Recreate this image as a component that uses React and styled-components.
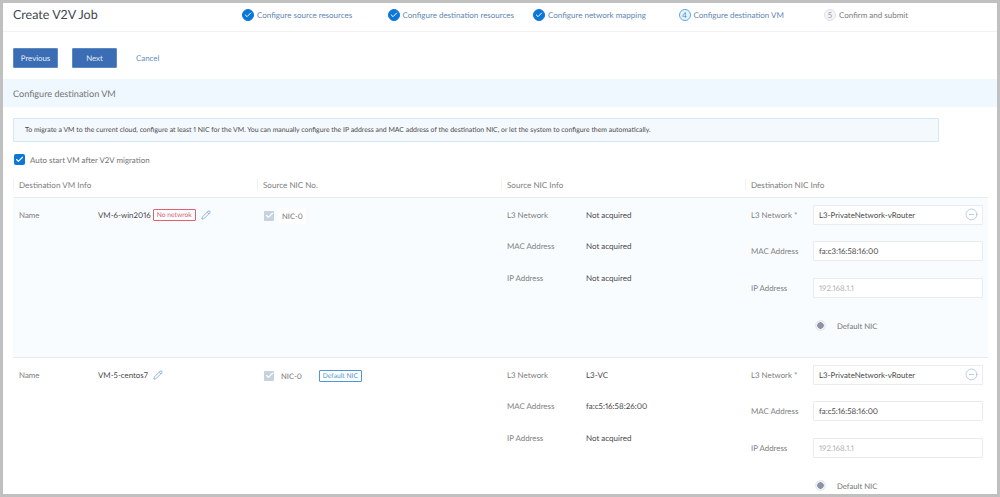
import React from "react";
import styled, { createGlobalStyle } from "styled-components";
import { Check, CircleMinus, Pencil } from "lucide-react";

const GlobalStyle = createGlobalStyle`
  html, body {
    margin: 0;
    padding: 0;
    background: #fff;
  }
  * {
    box-sizing: border-box;
  }
`;

const steps = [
  { label: "Configure source resources", state: "done" },
  { label: "Configure destination resources", state: "done" },
  { label: "Configure network mapping", state: "done" },
  { label: "Configure destination VM", state: "active", no: 4 },
  { label: "Confirm and submit", state: "todo", no: 5 }
];

const vms = [
  {
    name: "VM-6-win2016",
    noNetwork: true,
    source: { l3: "Not acquired", mac: "Not acquired", ip: "Not acquired" },
    mac: "fa:c3:16:58:16:00"
  },
  {
    name: "VM-5-centos7",
    isDefault: true,
    source: { l3: "L3-VC", mac: "fa:c5:16:58:26:00", ip: "Not acquired" },
    mac: "fa:c5:16:58:16:00"
  }
];

export default function App() {
  return (
    <Frame>
      <GlobalStyle />
      <Header>
        <Title>Create V2V Job</Title>
        <Steps>
          {steps.map((step) => (
            <Step key={step.label} state={step.state}>
              <StepIcon state={step.state}>
                {step.state === "done" ? <Check size={8} strokeWidth={3} /> : step.no}
              </StepIcon>
              {step.label}
            </Step>
          ))}
        </Steps>
      </Header>

      <Toolbar>
        <Button>Previous</Button>
        <Button>Next</Button>
        <CancelLink>Cancel</CancelLink>
      </Toolbar>

      <SectionBar>Configure destination VM</SectionBar>

      <Content>
        <Alert>
          To migrate a VM to the current cloud, configure at least 1 NIC for the VM. You can
          manually configure the IP address and MAC address of the destination NIC, or let the
          system to configure them automatically.
        </Alert>

        <AutoStart>
          <CheckBox>
            <Check size={9} strokeWidth={3} />
          </CheckBox>
          Auto start VM after V2V migration
        </AutoStart>

        <TableHead>
          <HeadCell>Destination VM Info</HeadCell>
          <HeadCell>Source NIC No.</HeadCell>
          <HeadCell>Source NIC Info</HeadCell>
          <HeadCell>Destination NIC Info</HeadCell>
        </TableHead>

        {vms.map((vm, index) => (
          <Row key={vm.name} tinted={index === 0}>
            <VmCell>
              <VmLabel>Name</VmLabel>
              <VmName>{vm.name}</VmName>
              {vm.noNetwork && <Tag color="#e0606e">No netwrok</Tag>}
              <EditIcon size={10} strokeWidth={1.6} />
            </VmCell>

            <NicCell>
              <DisabledBox>
                <Check size={9} strokeWidth={3} />
              </DisabledBox>
              <NicName tinted={index === 0}>NIC-0</NicName>
              {vm.isDefault && <DefaultTag color="#4f97d3">Default NIC</DefaultTag>}
            </NicCell>

            <SourceCell>
              <InfoRow>
                <InfoLabel>L3 Network</InfoLabel>
                <InfoValue>{vm.source.l3}</InfoValue>
              </InfoRow>
              <InfoRow>
                <InfoLabel>MAC Address</InfoLabel>
                <InfoValue>{vm.source.mac}</InfoValue>
              </InfoRow>
              <InfoRow>
                <InfoLabel>IP Address</InfoLabel>
                <InfoValue>{vm.source.ip}</InfoValue>
              </InfoRow>
            </SourceCell>

            <DestCell>
              <FieldRow>
                <InfoLabel>L3 Network *</InfoLabel>
                <Field>
                  L3-PrivateNetwork-vRouter
                  <MinusIcon size={13} strokeWidth={1} />
                </Field>
              </FieldRow>
              <FieldRow>
                <InfoLabel>MAC Address</InfoLabel>
                <Field>{vm.mac}</Field>
              </FieldRow>
              <FieldRow>
                <InfoLabel>IP Address</InfoLabel>
                <Field placeholder>192.168.1.1</Field>
              </FieldRow>
              <RadioRow>
                <Radio />
                Default NIC
              </RadioRow>
            </DestCell>
          </Row>
        ))}
      </Content>
    </Frame>
  );
}

const Frame = styled.div`
  width: 1000px;
  height: 497px;
  border: 3px solid #c0c0c0;
  background: #fff;
  overflow: hidden;
  font-family: Lato, "Open Sans", sans-serif;
  font-size: 8px;
  font-variant-numeric: proportional-nums;
  color: #666;
  text-rendering: geometricPrecision;
`;

const Header = styled.div`
  height: 29px;
  padding: 0 0 5px 10px;
  display: flex;
  align-items: center;
  border-bottom: 1px solid #f0f2f5;
`;

const Title = styled.div`
  width: 229px;
  font-size: 12.5px;
  color: #3f4650;
`;

const Steps = styled.div`
  display: grid;
  grid-template-columns: repeat(5, 145.5px);
`;

const Step = styled.div`
  display: flex;
  align-items: center;
  gap: 3px;
  white-space: nowrap;
  font-size: 8px;
  color: ${({ state }) => (state === "todo" ? "#7c7c7c" : "#5f86b5")};
`;

const StepIcon = styled.span`
  width: 12px;
  height: 12px;
  border-radius: 50%;
  display: flex;
  justify-content: center;
  align-items: center;
  font-size: 8px;
  color: ${({ state }) => (state === "active" ? "#3a8ad0" : state === "todo" ? "#9aa1aa" : "#fff")};
  background: ${({ state }) => (state === "done" ? "#0b78d7" : state === "active" ? "#e6f3fd" : "#f2f4f6")};
  border: 1px solid
    ${({ state }) => (state === "done" ? "#0b78d7" : state === "active" ? "#5aa9e6" : "#dfe3e8")};
`;

const Toolbar = styled.div`
  height: 47px;
  padding: 16px 0 0 10px;
  display: flex;
  align-items: flex-start;
  gap: 14px;
`;

const Button = styled.button`
  width: 45px;
  height: 20px;
  padding: 0;
  border: 1px solid #5b8ac4;
  border-radius: 1px;
  background: #3a6db3;
  color: #e8eef7;
  font-family: inherit;
  font-size: 7.8px;
  text-rendering: geometricPrecision;
`;

const CancelLink = styled.a`
  margin-left: 5px;
  line-height: 20px;
  font-size: 7.9px;
  color: #5f8fc4;
`;

const SectionBar = styled.div`
  height: 28px;
  padding: 1px 0 0 10px;
  display: flex;
  align-items: center;
  background: #eff8fe;
  font-size: 9.1px;
  color: #737373;
`;

const Content = styled.div`
  padding: 11px 0 0 10px;
`;

const Alert = styled.div`
  width: 926px;
  height: 24px;
  padding-left: 11px;
  display: flex;
  align-items: center;
  background: #f4f9fe;
  border: 1px solid #d3e7f8;
  border-radius: 1px;
  font-size: 6.9px;
  color: #4a4a4a;
  white-space: nowrap;
`;

const AutoStart = styled.div`
  height: 11px;
  margin: 12px 0 0 1px;
  display: flex;
  align-items: center;
  gap: 5px;
  font-size: 7.95px;
  color: #737373;
`;

const CheckBox = styled.span`
  width: 11px;
  height: 11px;
  border-radius: 2px;
  background: #0b78d7;
  color: #fff;
  display: flex;
  justify-content: center;
  align-items: center;
`;

const TableHead = styled.div`
  width: 975px;
  height: 27px;
  margin-top: 6px;
  padding-top: 1px;
  display: grid;
  grid-template-columns: repeat(4, 244px);
  align-items: center;
  border-bottom: 1px solid #e6eef5;
`;

const HeadCell = styled.div`
  height: 11px;
  padding-left: 5px;
  display: flex;
  align-items: center;
  border-left: 1px solid #f0f2f5;
  font-size: 8.1px;
  color: #7d7d7d;
`;

const Row = styled.div`
  width: 975px;
  height: 160px;
  display: grid;
  grid-template-columns: repeat(4, 244px);
  align-items: start;
  background: ${({ tinted }) => (tinted ? "#f9fcff" : "#fff")};
  border-bottom: 1px solid #e6ebf0;
`;

const VmCell = styled.div`
  padding-left: 6px;
  display: flex;
  align-items: center;
  height: 34px;
`;

const VmLabel = styled.span`
  width: 79px;
  font-size: 7.9px;
  color: #7d7d7d;
`;

const VmName = styled.span`
  font-size: 7.9px;
  color: #4a4a4a;
`;

const Tag = styled.span`
  height: 12px;
  padding: 0 3px;
  display: flex;
  align-items: center;
  border: 1px solid ${({ color }) => color};
  border-radius: 1px;
  font-size: 6.7px;
  color: ${({ color }) => color};
  margin-left: 2px;
  white-space: nowrap;
`;

const DefaultTag = styled(Tag)`
  margin-left: 17px;
`;

const EditIcon = styled(Pencil)`
  margin-left: 5px;
  color: #5f8fd0;
`;

const NicCell = styled.div`
  height: 35px;
  padding-left: 7px;
  display: flex;
  align-items: center;
`;

const DisabledBox = styled.span`
  width: 10px;
  height: 10px;
  border-radius: 1px;
  background: #c8d2dc;
  color: #fff;
  display: flex;
  justify-content: center;
  align-items: center;
`;

const NicName = styled.span`
  margin-left: ${({ tinted }) => (tinted ? "5px" : "7px")};
  padding: 0 ${({ tinted }) => (tinted ? "3px" : "0")};
  line-height: 16px;
  background: ${({ tinted }) => (tinted ? "#fff" : "transparent")};
  font-size: 7.6px;
  color: #737373;
`;

const SourceCell = styled.div`
  padding: 11px 0 0 6px;
  display: flex;
  flex-direction: column;
  gap: 20.5px;
`;

const InfoRow = styled.div`
  height: 11px;
  display: flex;
  align-items: center;
`;

const InfoLabel = styled.span`
  width: 79px;
  font-size: 7.9px;
  color: #7d7d7d;
  flex: none;
`;

const FieldRow = styled(InfoRow)`
  height: 20px;
  width: 238px;
  & > span {
    width: 62px;
  }
`;

const InfoValue = styled.span`
  font-size: 8px;
  color: #4a4a4a;
`;

const DestCell = styled.div`
  padding: 6.5px 0 0 6px;
  display: flex;
  flex-direction: column;
  gap: 16.7px;
`;

const Field = styled.div`
  width: 170px;
  height: 20px;
  padding: 0 4px 0 5px;
  display: flex;
  align-items: center;
  justify-content: space-between;
  background: #fff;
  border: 1px solid #e8ebef;
  border-radius: 1px;
  font-size: 7.9px;
  color: ${({ placeholder }) => (placeholder ? "#b4b4b4" : "#4a4a4a")};
`;

const MinusIcon = styled(CircleMinus)`
  color: #7ea6d8;
`;

const RadioRow = styled.div`
  height: 12px;
  margin: 5px 0 0 64px;
  display: flex;
  align-items: center;
  gap: 11px;
  font-size: 7.7px;
  color: #737373;
`;

const Radio = styled.span`
  width: 11px;
  height: 11px;
  border-radius: 50%;
  background: radial-gradient(circle, #8d95a5 0 3px, #eef0f3 3.5px);
  border: 1px solid #e6e8ec;
`;
